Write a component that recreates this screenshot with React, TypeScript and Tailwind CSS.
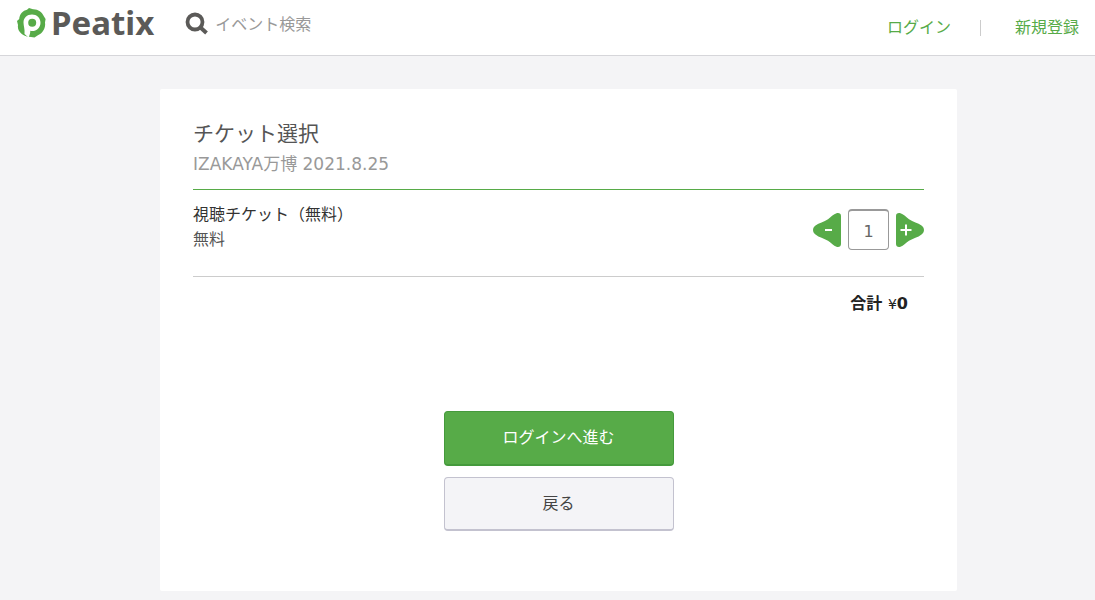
import { useState } from "react";

const GREEN = "#57ab48";

function PeatixLogo() {
  return (
    <a href="#" className="flex items-center" aria-label="Peatix">
      <svg width="31" height="32" viewBox="0 0 31 32" className="shrink-0" aria-hidden="true">
        <path
          d="M11 29.500 C5 28 1 23 2 18 L1 14 L3.200 12 C3.600 7 7 3.600 11 2.800 L13 1 L17 2.200 C22 2 26 5 28 9.500 L29.600 12 L29 15.500 C30 21 26.500 26.500 21.500 28.500 L18.500 30.600 L15 30 Z"
          fill={GREEN}
        />
        <path
          d="M8.500 27 C9 22 7.500 19 7.500 15.500 C7.500 11 11 7.500 16 7.500 C20.700 7.500 24.500 11 24.500 15.700 C24.500 20.400 20.700 24 16.200 24 C15.500 24 14.900 23.900 14.300 23.800 C14.300 26.500 13.500 28.500 12.500 30.500 Z"
          fill="#ffffff"
        />
        <circle cx="16.200" cy="15.700" r="4" fill={GREEN} />
      </svg>
      <span className="ml-1 font-['Noto_Sans',sans-serif] text-[33px] leading-[46px] font-bold text-[#5b5a58]">
        Peatix
      </span>
    </a>
  );
}

function SearchIcon() {
  return (
    <svg width="24" height="24" viewBox="0 0 24 24" className="shrink-0" aria-hidden="true">
      <circle cx="10" cy="10" r="7.500" fill="none" stroke="#5b5a58" strokeWidth="3.800" />
      <path d="M15.500 15.500 L21.500 21" stroke="#5b5a58" strokeWidth="4" />
    </svg>
  );
}

function Header() {
  return (
    <header className="flex h-14 items-start justify-between border-b border-[#d6d6da] bg-white px-4">
      <div className="flex items-center">
        <PeatixLogo />
        <label className="ml-[31px] flex items-center gap-1.5 pt-0.5">
          <SearchIcon />
          <input
            type="search"
            aria-label="イベント検索"
            placeholder="イベント検索"
            className="h-8 w-48 bg-transparent text-[#555555] outline-none placeholder:text-[#999999]"
          />
        </label>
      </div>
      <nav className="flex items-center pt-4 leading-6 text-[#57ab48]">
        <a href="#">ログイン</a>
        <span className="mr-[34px] ml-[29px] h-4 w-px bg-[#cccccc]" aria-hidden="true" />
        <a href="#">新規登録</a>
      </nav>
    </header>
  );
}

interface StepperProps {
  value: number;
  onChange: (value: number) => void;
}

function TicketStepper({ value, onChange }: StepperProps) {
  return (
    <div className="flex items-center gap-[7px]">
      <button type="button" aria-label="減らす" onClick={() => onChange(Math.max(0, value - 1))}>
        <svg width="28" height="34" viewBox="0 0 28 34" className="block">
          <path
            d="M28 3 V31 C28 33.500 26 34.300 23.500 33.700 C20.500 33 18.500 30 15 27.800 C11 25.200 6 24.500 2.500 21.500 C-0.800 18.700 -0.800 15 2.500 12.500 C6 9.800 11 9 15 6.200 C18.500 3.800 20.500 1 23.500 0.300 C26 -0.300 28 0.500 28 3 Z"
            fill={GREEN}
          />
          <path d="M12 17 H19" stroke="#ffffff" strokeWidth="2" />
        </svg>
      </button>
      <input
        type="text"
        inputMode="numeric"
        aria-label="枚数"
        value={value}
        onChange={e => onChange(Number(e.target.value) || 0)}
        className="size-[41px] rounded border border-t-2 border-[#999999] bg-white pt-0.5 text-center text-[#666666]"
      />
      <button type="button" aria-label="増やす" onClick={() => onChange(value + 1)}>
        <svg width="28" height="34" viewBox="0 0 28 34" className="block">
          <path
            d="M0 3 V31 C0 33.500 2 34.300 4.500 33.700 C7.500 33 9.500 30 13 27.800 C17 25.200 22 24.500 25.500 21.500 C28.800 18.700 28.800 15 25.500 12.500 C22 9.800 17 9 13 6.200 C9.500 3.800 7.500 1 4.500 0.300 C2 -0.300 0 0.500 0 3 Z"
            fill={GREEN}
          />
          <path d="M4.500 17 H15.500 M10 11.500 V22.500" stroke="#ffffff" strokeWidth="2" />
        </svg>
      </button>
    </div>
  );
}

export default function App() {
  const [count, setCount] = useState(1);

  return (
    <div className="min-h-screen bg-[#f4f4f6] font-['DejaVu_Sans','Noto_Sans_CJK_JP',sans-serif] text-base text-[#555555]">
      <Header />
      <main className="pt-[33px] pb-2.5 pl-[22px]">
        <section className="mx-auto max-w-[797px] rounded-xs bg-white px-[33px] pt-[29px] pb-[60px]">
          {/* イベント名 */}
          <div className="border-b border-[#57ab48] pb-3">
            <h1 className="text-[21px] leading-8">チケット選択</h1>
            <p className="mt-0.5 text-[17px] leading-[25px] text-[#999999]">IZAKAYA万博 2021.8.25</p>
          </div>

          {/* チケット */}
          <div className="flex items-start justify-between border-b border-[#cccccc] pt-3 pb-6">
            <div className="leading-[25px]">
              <h2 className="text-[#333333]">視聴チケット（無料）</h2>
              <p>無料</p>
            </div>
            <div className="pt-[7px]">
              <TicketStepper value={count} onChange={setCount} />
            </div>
          </div>

          <p className="pt-[15px] pr-4 text-right leading-6 font-bold text-[#222222]">
            合計 <span className="text-sm font-normal">¥</span>0
          </p>

          <div className="mx-auto mt-[95px] flex w-[230px] flex-col gap-[11px]">
            <button
              type="button"
              className="h-[55px] rounded border border-b-2 border-[#459a3c] bg-[#57ab48] text-white"
            >
              ログインへ進む
            </button>
            <button
              type="button"
              className="h-[54px] rounded border border-b-2 border-[#c3c2cf] bg-[#f4f4f7] text-[#444444]"
            >
              戻る
            </button>
          </div>
        </section>
      </main>
    </div>
  );
}
